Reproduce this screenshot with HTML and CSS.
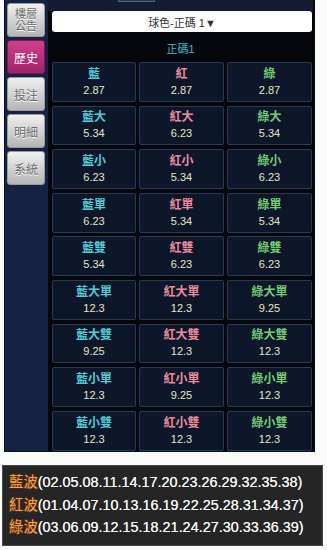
FILE: index.html
```html
<!DOCTYPE html>
<html lang="zh-Hant">
<head>
<meta charset="utf-8">
<link rel="stylesheet" href="styles.css">
</head>
<body>
<div class="panel">
  <div class="sidebar">
    <div class="btn two">樓層<br>公告</div>
    <div class="btn active">歷史</div>
    <div class="btn">投注</div>
    <div class="btn">明細</div>
    <div class="btn">系統</div>
  </div>
  <div class="main">
    <div class="topstrip"><span class="tab"></span></div>
    <div class="select">球色-正碼 1▼</div>
    <div class="heading">正碼1</div>
    <div class="grid">
      <div class="cell"><span class="lb b">藍</span><span class="num">2.87</span></div>
      <div class="cell"><span class="lb r">紅</span><span class="num">2.87</span></div>
      <div class="cell"><span class="lb g">綠</span><span class="num">2.87</span></div>
      <div class="cell"><span class="lb b">藍大</span><span class="num">5.34</span></div>
      <div class="cell"><span class="lb r">紅大</span><span class="num">6.23</span></div>
      <div class="cell"><span class="lb g">綠大</span><span class="num">5.34</span></div>
      <div class="cell"><span class="lb b">藍小</span><span class="num">6.23</span></div>
      <div class="cell"><span class="lb r">紅小</span><span class="num">5.34</span></div>
      <div class="cell"><span class="lb g">綠小</span><span class="num">6.23</span></div>
      <div class="cell"><span class="lb b">藍單</span><span class="num">6.23</span></div>
      <div class="cell"><span class="lb r">紅單</span><span class="num">5.34</span></div>
      <div class="cell"><span class="lb g">綠單</span><span class="num">5.34</span></div>
      <div class="cell"><span class="lb b">藍雙</span><span class="num">5.34</span></div>
      <div class="cell"><span class="lb r">紅雙</span><span class="num">6.23</span></div>
      <div class="cell"><span class="lb g">綠雙</span><span class="num">6.23</span></div>
      <div class="cell"><span class="lb b">藍大單</span><span class="num">12.3</span></div>
      <div class="cell"><span class="lb r">紅大單</span><span class="num">12.3</span></div>
      <div class="cell"><span class="lb g">綠大單</span><span class="num">9.25</span></div>
      <div class="cell"><span class="lb b">藍大雙</span><span class="num">9.25</span></div>
      <div class="cell"><span class="lb r">紅大雙</span><span class="num">12.3</span></div>
      <div class="cell"><span class="lb g">綠大雙</span><span class="num">12.3</span></div>
      <div class="cell"><span class="lb b">藍小單</span><span class="num">12.3</span></div>
      <div class="cell"><span class="lb r">紅小單</span><span class="num">9.25</span></div>
      <div class="cell"><span class="lb g">綠小單</span><span class="num">12.3</span></div>
      <div class="cell"><span class="lb b">藍小雙</span><span class="num">12.3</span></div>
      <div class="cell"><span class="lb r">紅小雙</span><span class="num">12.3</span></div>
      <div class="cell"><span class="lb g">綠小雙</span><span class="num">12.3</span></div>
    </div>
  </div>
</div>
<div class="waves">
  <div class="line"><span class="wl">藍波</span>(02.05.08.11.14.17.20.23.26.29.32.35.38)</div>
  <div class="line"><span class="wl">紅波</span>(01.04.07.10.13.16.19.22.25.28.31.34.37)</div>
  <div class="line"><span class="wl">綠波</span>(03.06.09.12.15.18.21.24.27.30.33.36.39)</div>
</div>
</body>
</html>
```
FILE: styles.css
```css
* { box-sizing: border-box; }
body {
  margin: 0;
  background: #fafafa;
  font-family: "Liberation Sans", "Noto Sans CJK TC", sans-serif;
}
.panel {
  margin-left: 4px;
  width: 311px;
  height: 452px;
  display: flex;
  background: #172143;
  border-left: 1px solid #0a0f1e;
  border-bottom: 1px solid #0a0f1e;
}
.sidebar {
  width: 43px;
  padding: 3px 0 0 2px;
  display: flex;
  flex-direction: column;
  gap: 3px;
}
.btn {
  width: 38px;
  height: 34px;
  border-radius: 3px;
  background: linear-gradient(#f0f0f0, #d2d2d2 50%, #b6b6b6);
  border: 1px solid #9a9a9a;
  color: #6a6a6a;
  font-size: 12px;
  display: flex;
  align-items: center;
  justify-content: center;
  text-align: center;
  text-shadow: 0 1px 0 #fff;
}
.btn.two { font-size: 11px; line-height: 12px; }
.btn.active {
  background: linear-gradient(#d2408c, #b32c78 60%, #a02468);
  border-color: #7a1a50;
  color: #fff;
  text-shadow: none;
}
.main {
  flex: 1;
  background: #05070c;
  border-right: 2px solid #04060a;
  display: flex;
  flex-direction: column;
}
.topstrip {
  height: 11px;
  background: #131c30;
  position: relative;
}
.tab {
  position: absolute;
  left: 70px;
  top: 0;
  width: 37px;
  height: 2px;
  background: #223a48;
  border: 1px solid #3d6f7a;
  border-top: none;
}
.select {
  margin: 0 1px 0 4px;
  height: 21px;
  background: #fff;
  border-radius: 3px;
  color: #333;
  font-size: 11px;
  display: flex;
  align-items: center;
  justify-content: center;
}
.heading {
  height: 30px;
  display: flex;
  align-items: center;
  justify-content: center;
  color: #3fb8c8;
  font-size: 11px;
  padding-top: 2px;
}
.grid {
  display: grid;
  grid-template-columns: 84px 85px 85px;
  grid-auto-rows: 39.8px;
  column-gap: 3px;
  row-gap: 3.8px;
  padding: 0 0 0 4px;
}
.cell {
  background: #0e172a;
  border: 1px solid #2c3a50;
  border-radius: 2px;
  display: flex;
  flex-direction: column;
  align-items: center;
  justify-content: center;
  gap: 3px;
}
.lb {
  font-size: 12px;
  line-height: 14px;
  font-weight: bold;
}
.lb.b { color: #52cad8; }
.lb.r { color: #e98c9e; }
.lb.g { color: #72cc74; }
.num {
  font-size: 11px;
  line-height: 13px;
  color: #e6e4c4;
}
.waves {
  margin: 13px 0 0 2px;
  width: 321px;
  background: #252525;
  border: 1px solid #4a4a4a;
  padding: 5px 0 6px 6px;
}
.line {
  color: #f4f4f4;
  font-size: 14.4px;
  line-height: 22.5px;
  white-space: nowrap;
  text-shadow: 0 0 0.4px #fff;
}
.wl {
  color: #f0a83a;
  text-shadow: 0 0 2px #b8321a;
}
```
